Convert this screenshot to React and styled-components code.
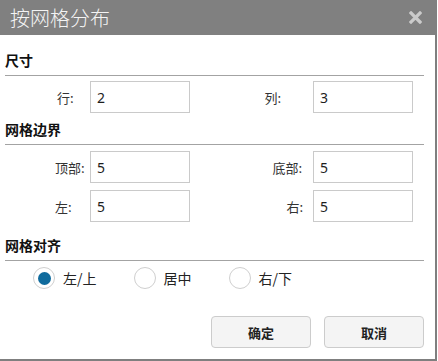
import React from 'react';
import styled, { createGlobalStyle } from 'styled-components';

const GlobalStyle = createGlobalStyle`
  html, body {
    margin: 0;
    padding: 0;
    background: #fff;
  }
  body {
    font-family: "Noto Sans", "Noto Sans CJK SC", sans-serif;
    color: #222;
  }
`;

const Dialog = styled.div`
  width: 437px;
  height: 361px;
  display: flex;
  flex-direction: column;
  box-sizing: border-box;
`;

const TitleBar = styled.div`
  height: 35px;
  flex: none;
  background: #808080;
  display: flex;
  align-items: center;
  justify-content: space-between;
  padding: 0 15px 0 10px;
`;

const Title = styled.div`
  font-family: "Noto Sans CJK SC", sans-serif;
  font-size: 20px;
  font-weight: 300;
  color: #f4f4f4;
`;

const CloseButton = styled.button`
  border: none;
  background: none;
  padding: 0;
  width: 13px;
  height: 13px;
  display: flex;
  cursor: pointer;
`;

const Body = styled.div`
  flex: 1;
  display: flex;
  flex-direction: column;
  padding: 0 11px 11px 5px;
  border-right: 2px solid #7f7f7f;
  border-bottom: 2px solid #7f7f7f;
  box-sizing: border-box;
`;

const Heading = styled.div`
  font-family: "Noto Sans CJK SC", sans-serif;
  font-size: 14px;
  font-weight: 700;
  line-height: 20px;
  color: #111;
  padding-bottom: 5px;
  border-bottom: 1px solid #a3a3a3;
  margin-top: ${p => p.$top}px;
`;

const FieldGrid = styled.div`
  display: grid;
  grid-template-columns: 85px 100px 1fr 100px;
  row-gap: 7px;
  margin-top: ${p => p.$top}px;
  width: 408px;
`;

const Label = styled.label`
  font-family: "Noto Sans CJK SC", sans-serif;
  font-size: 13px;
  color: #333;
  align-self: center;
  text-align: ${p => p.$align};
  padding-left: ${p => (p.$align === 'left' ? p.$inset : 0)}px;
  padding-right: ${p => (p.$align === 'right' ? p.$inset : 0)}px;
`;

const Input = styled.input`
  width: 100px;
  height: 32px;
  box-sizing: border-box;
  border: 1px solid #cacaca;
  background: #fff;
  padding: 0 6px;
  font-family: "Noto Sans", sans-serif;
  font-size: 14px;
  color: #1e1e1e;
  outline: none;
`;

const RadioRow = styled.div`
  display: flex;
  align-items: center;
  gap: 37px;
  padding: 6px 0 0 28px;
`;

const RadioItem = styled.label`
  display: flex;
  align-items: center;
  gap: 8px;
  font-family: "Noto Sans CJK SC", sans-serif;
  font-size: 14px;
  color: #222;
  cursor: pointer;
`;

const RadioCircle = styled.span`
  width: 22px;
  height: 22px;
  box-sizing: border-box;
  border-radius: 50%;
  border: 1px solid #cfcfcf;
  background: #fff;
  display: flex;
  align-items: center;
  justify-content: center;
  &::after {
    content: '';
    width: 13px;
    height: 13px;
    border-radius: 50%;
    background: ${p => (p.$checked ? '#106b9d' : 'transparent')};
  }
`;

const Footer = styled.div`
  margin-top: auto;
  display: flex;
  justify-content: flex-end;
  gap: 13px;
`;

const Button = styled.button`
  width: 100px;
  height: 32px;
  box-sizing: border-box;
  border: 1px solid #cccccc;
  border-radius: 4px;
  background: #f4f4f4;
  font-family: "Noto Sans CJK SC", sans-serif;
  font-size: 13px;
  font-weight: 700;
  color: #222;
  cursor: pointer;
`;

const sizeFields = [
  { label: '行:', inset: 52, value: '2' },
  { label: '列:', inset: 32, value: '3' },
];

const marginFields = [
  { label: '顶部:', inset: 50, value: '5' },
  { label: '底部:', inset: 11, value: '5' },
  { label: '左:', inset: 50, value: '5' },
  { label: '右:', inset: 10, value: '5' },
];

function Fields({ items, top }) {
  return (
    <FieldGrid $top={top}>
      {items.map((f, i) => (
        <React.Fragment key={f.label}>
          <Label $align={i % 2 === 0 ? 'left' : 'right'} $inset={f.inset}>
            {f.label}
          </Label>
          <Input defaultValue={f.value} />
        </React.Fragment>
      ))}
    </FieldGrid>
  );
}

export default function App() {
  const [align, setAlign] = React.useState('start');
  const options = [
    { id: 'start', text: '左/上' },
    { id: 'center', text: '居中' },
    { id: 'end', text: '右/下' },
  ];
  return (
    <>
      <GlobalStyle />
      <Dialog>
        <TitleBar>
          <Title>按网格分布</Title>
          <CloseButton aria-label="close">
            <svg width="13" height="13" viewBox="0 0 13 13">
              <path d="M2 2 L11 11 M11 2 L2 11" stroke="#cbcbcb" strokeWidth="3.2" strokeLinecap="square" />
            </svg>
          </CloseButton>
        </TitleBar>
        <Body>
          <Heading $top={15}>尺寸</Heading>
          <Fields items={sizeFields} top={5} />
          <Heading $top={6}>网格边界</Heading>
          <Fields items={marginFields} top={6} />
          <Heading $top={13}>网格对齐</Heading>
          <RadioRow>
            {options.map(o => (
              <RadioItem key={o.id} onClick={() => setAlign(o.id)}>
                <RadioCircle $checked={align === o.id} />
                {o.text}
              </RadioItem>
            ))}
          </RadioRow>
          <Footer>
            <Button>确定</Button>
            <Button>取消</Button>
          </Footer>
        </Body>
      </Dialog>
    </>
  );
}
